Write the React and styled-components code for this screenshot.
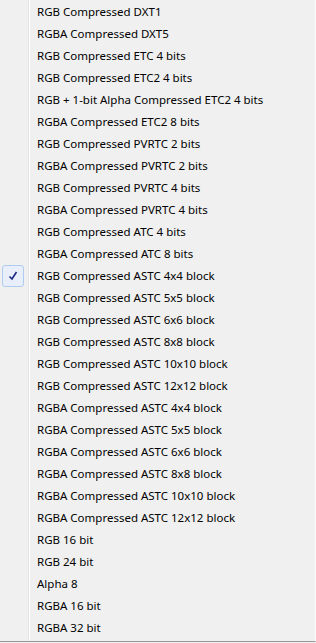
import styled, { createGlobalStyle } from "styled-components";

const items = [
  "RGB Compressed DXT1",
  "RGBA Compressed DXT5",
  "RGB Compressed ETC 4 bits",
  "RGB Compressed ETC2 4 bits",
  "RGB + 1-bit Alpha Compressed ETC2 4 bits",
  "RGBA Compressed ETC2 8 bits",
  "RGB Compressed PVRTC 2 bits",
  "RGBA Compressed PVRTC 2 bits",
  "RGB Compressed PVRTC 4 bits",
  "RGBA Compressed PVRTC 4 bits",
  "RGB Compressed ATC 4 bits",
  "RGBA Compressed ATC 8 bits",
  "RGB Compressed ASTC 4x4 block",
  "RGB Compressed ASTC 5x5 block",
  "RGB Compressed ASTC 6x6 block",
  "RGB Compressed ASTC 8x8 block",
  "RGB Compressed ASTC 10x10 block",
  "RGB Compressed ASTC 12x12 block",
  "RGBA Compressed ASTC 4x4 block",
  "RGBA Compressed ASTC 5x5 block",
  "RGBA Compressed ASTC 6x6 block",
  "RGBA Compressed ASTC 8x8 block",
  "RGBA Compressed ASTC 10x10 block",
  "RGBA Compressed ASTC 12x12 block",
  "RGB 16 bit",
  "RGB 24 bit",
  "Alpha 8",
  "RGBA 16 bit",
  "RGBA 32 bit",
];

const checked = "RGB Compressed ASTC 4x4 block";

const Global = createGlobalStyle`
  html, body { margin: 0; padding: 0; background: #f0f0f0; }
`;

const Menu = styled.div`
  width: 315px;
  height: 641px;
  background: #f0f0f0;
  border-right: 1px solid #fbfbfb;
  border-bottom: 1px solid #979797;
  font-family: "Noto Sans", "Open Sans", sans-serif;
  font-size: 11.5px;
  color: #000;
  box-sizing: content-box;
  display: flex;
`;

const Gutter = styled.div`
  width: 28px;
  flex: none;
  border-right: 1px solid #e2e3e3;
  box-shadow: 1px 0 0 #ffffff;
`;

const List = styled.ul`
  list-style: none;
  margin: 0;
  padding: 0;
  margin-left: -29px;
  flex: 1;
`;

const Item = styled.li`
  height: 22px;
  display: flex;
  align-items: center;
  padding-left: 37px;
  position: relative;
  white-space: nowrap;
`;

const Check = styled.span`
  position: absolute;
  left: 2px;
  top: 1px;
  width: 20px;
  height: 20px;
  border: 1px solid #aeccf1;
  border-radius: 3px;
  background: #e8effa;
  display: flex;
  align-items: center;
  justify-content: center;
`;

export default function App() {
  return (
    <>
      <Global />
      <Menu>
        <Gutter />
        <List>
          {items.map((t) => (
            <Item key={t}>
              {t === checked && (
                <Check>
                  <svg width="10" height="10" viewBox="0 0 10 10">
                    <path d="M1.5 5.5 L4 8 L8.5 1" fill="none" stroke="#1a2a80" strokeWidth="1.6" />
                  </svg>
                </Check>
              )}
              {t}
            </Item>
          ))}
        </List>
      </Menu>
    </>
  );
}
